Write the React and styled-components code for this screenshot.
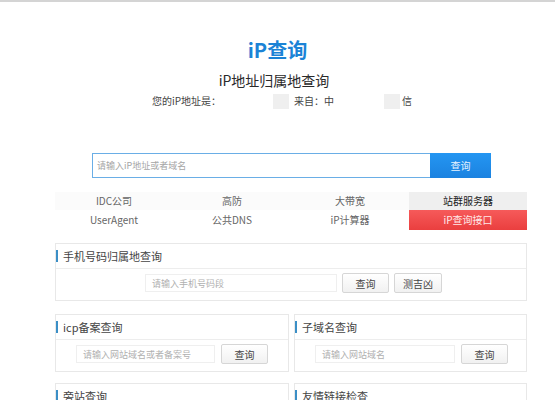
import styled, { createGlobalStyle } from "styled-components";

const Global = createGlobalStyle`
  body {
    margin: 0;
    background: #fff;
    font-family: "Noto Sans CJK SC", "Noto Sans", sans-serif;
    color: #333;
    overflow: hidden;
  }
`;

const TopLine = styled.div`
  height: 2px;
  background: #d4d4d4;
`;

const Title = styled.h1`
  margin: 35px 0 0;
  height: 26px;
  line-height: 26px;
  text-align: center;
  font-size: 20px;
  font-weight: 700;
  color: #1b83d6;
`;

const Subtitle = styled.h2`
  margin: 6px 0 0;
  height: 22px;
  line-height: 22px;
  text-align: center;
  font-size: 14px;
  font-weight: 400;
  color: #2a2a2a;
  padding-right: 7px;
`;

const IpLine = styled.div`
  margin: 2px 0 0 152px;
  height: 16px;
  line-height: 16px;
  font-size: 10px;
  color: #444;
  display: flex;
  align-items: center;
`;

const Blank = styled.span`
  display: inline-block;
  width: ${(p) => p.$w}px;
  height: 15px;
  margin-left: ${(p) => p.$gap}px;
  background: #efefef;
`;

const Container = styled.div`
  width: 472px;
  margin-left: 55px;
`;

const SearchForm = styled.div`
  display: flex;
  margin: 44px 0 0 37px;
  width: 399px;
  height: 25px;
`;

const SearchInput = styled.div`
  flex: 1;
  border: 1px solid #6aaee6;
  border-right: none;
  font-size: 9px;
  color: #a5a5a5;
  line-height: 23px;
  padding-left: 4px;
`;

const SearchButton = styled.div`
  width: 61px;
  background: linear-gradient(#2496f2, #1b82e0);
  color: #e8f3ff;
  font-size: 10px;
  line-height: 25px;
  text-align: center;
`;

const Nav = styled.div`
  display: grid;
  grid-template-columns: repeat(4, 1fr);
  grid-template-rows: 18px 20px;
  margin-top: 14px;
`;

const NavItem = styled.div`
  font-size: 10px;
  text-align: center;
  line-height: ${(p) => (p.$row === 1 ? 18 : 20)}px;
  color: ${(p) => (p.$hot ? "#ffe9e9" : p.$dark ? "#222" : "#666")};
  background: ${(p) =>
    p.$hot
      ? "linear-gradient(#f65a5a, #ea3f3f)"
      : p.$dark
      ? "#efefef"
      : p.$row === 1
      ? "#fbfbfb"
      : "#fff"};
`;

const Panel = styled.div`
  border: 1px solid #e8e8e8;
  height: 56px;
  background: #fff;
`;

const PanelHead = styled.div`
  height: 24px;
  border-bottom: 1px solid #ededed;
  display: flex;
  align-items: center;
  font-size: 11px;
  color: #444;
  &::before {
    content: "";
    width: 2px;
    height: 12px;
    background: #3b8fc6;
    margin-right: 5px;
  }
`;

const PanelBody = styled.div`
  display: flex;
  align-items: center;
  padding-left: ${(p) => p.$pad}px;
  padding-top: 4px;
  gap: ${(p) => p.$gap || 6}px;
`;

const SmallInput = styled.div`
  width: ${(p) => p.$w}px;
  height: 18px;
  border: 1px solid #efefef;
  font-size: 9px;
  line-height: 18px;
  color: #b0b0b0;
  padding-left: 6px;
  box-sizing: border-box;
`;

const SmallButton = styled.div`
  width: ${(p) => p.$w || 47}px;
  height: 20px;
  border: 1px solid #d6d6d6;
  border-radius: 2px;
  background: linear-gradient(#fff, #f1f1f1);
  font-size: 10px;
  line-height: 20px;
  text-align: center;
  color: #444;
  box-sizing: border-box;
`;

const Row = styled.div`
  display: grid;
  grid-template-columns: 234px 233px;
  gap: 5px;
  margin-top: ${(p) => p.$mt}px;
`;

const Spaced = styled.div`
  margin-top: ${(p) => p.$mt}px;
`;

const navRow1 = ["IDC公司", "高防", "大带宽", "站群服务器"];
const navRow2 = ["UserAgent", "公共DNS", "iP计算器", "iP查询接口"];

export default function App() {
  return (
    <>
      <Global />
      <TopLine />
      <Title>iP查询</Title>
      <Subtitle>iP地址归属地查询</Subtitle>
      <IpLine>
        您的iP地址是：
        <Blank $w={16} $gap={52} />
        <span style={{ marginLeft: 5 }}>来自：中</span>
        <Blank $w={16} $gap={50} />
        <span style={{ marginLeft: 2 }}>信</span>
      </IpLine>
      <Container>
        <SearchForm>
          <SearchInput>请输入iP地址或者域名</SearchInput>
          <SearchButton>查询</SearchButton>
        </SearchForm>
        <Nav>
          {navRow1.map((t, i) => (
            <NavItem key={t} $row={1} $dark={i === 3}>
              {t}
            </NavItem>
          ))}
          {navRow2.map((t, i) => (
            <NavItem key={t} $row={2} $hot={i === 3}>
              {t}
            </NavItem>
          ))}
        </Nav>
        <Spaced $mt={13}>
          <Panel>
            <PanelHead>手机号码归属地查询</PanelHead>
            <PanelBody $pad={89} $gap={5}>
              <SmallInput $w={192}>请输入手机号码段</SmallInput>
              <SmallButton>查询</SmallButton>
              <SmallButton $w={48}>测吉凶</SmallButton>
            </PanelBody>
          </Panel>
        </Spaced>
        <Row $mt={13}>
          <Panel>
            <PanelHead>icp备案查询</PanelHead>
            <PanelBody $pad={20}>
              <SmallInput $w={139}>请输入网站域名或者备案号</SmallInput>
              <SmallButton>查询</SmallButton>
            </PanelBody>
          </Panel>
          <Panel>
            <PanelHead>子域名查询</PanelHead>
            <PanelBody $pad={20}>
              <SmallInput $w={140}>请输入网站域名</SmallInput>
              <SmallButton>查询</SmallButton>
            </PanelBody>
          </Panel>
        </Row>
        <Row $mt={11}>
          <Panel>
            <PanelHead>旁站查询</PanelHead>
          </Panel>
          <Panel>
            <PanelHead>友情链接检查</PanelHead>
          </Panel>
        </Row>
      </Container>
    </>
  );
}
